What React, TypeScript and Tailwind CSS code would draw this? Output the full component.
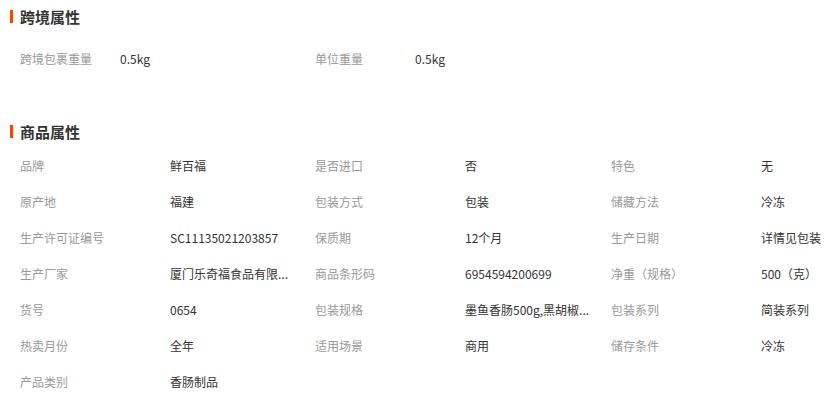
const font = { fontFamily: '"Noto Sans CJK SC", "Liberation Sans", sans-serif' }

const cross = [
  ['跨境包裹重量', '0.5kg'],
  ['单位重量', '0.5kg'],
]

// long values are shown shortened, as on the product page
const goods = [
  ['品牌', '鲜百福'],
  ['是否进口', '否'],
  ['特色', '无'],
  ['原产地', '福建'],
  ['包装方式', '包装'],
  ['储藏方法', '冷冻'],
  ['生产许可证编号', 'SC11135021203857'],
  ['保质期', '12个月'],
  ['生产日期', '详情见包装'],
  ['生产厂家', '厦门乐奇福食品有限...'],
  ['商品条形码', '6954594200699'],
  ['净重（规格）', '500（克）'],
  ['货号', '0654'],
  ['包装规格', '墨鱼香肠500g,黑胡椒...'],
  ['包装系列', '简装系列'],
  ['热卖月份', '全年'],
  ['适用场景', '商用'],
  ['储存条件', '冷冻'],
  ['产品类别', '香肠制品'],
]

function Title({ text }: { text: string }) {
  return (
    <div className="flex items-center h-[32px] pl-[10px]">
      <span className="w-[3px] h-[13px] bg-[#ff4400] mr-[7px]" />
      <h2 className="text-[15px] font-bold text-[#333] leading-none">{text}</h2>
    </div>
  )
}

export default function App() {
  return (
    <div className="w-[833px] h-[396px] bg-white overflow-hidden" style={font}>
      <Title text="跨境属性" />
      <div className="grid grid-cols-[295px_295px] pl-[20px] mt-[9px]">
        {cross.map(([k, v]) => (
          <div key={k} className="flex items-center h-[36px] text-[12px]">
            <span className="w-[100px] text-[#999]">{k}</span>
            <span className="text-[#333]">{v}</span>
          </div>
        ))}
      </div>

      <div className="mt-[38px]">
        <Title text="商品属性" />
        <div className="grid grid-cols-[295px_296px_222px] pl-[20px] mt-[1px]">
          {goods.map(([k, v]) => (
            <div key={k} className="flex items-center h-[36px] text-[12px]">
              <span className="w-[150px] shrink-0 text-[#999]">{k}</span>
              <span className="whitespace-nowrap text-[#333]">{v}</span>
            </div>
          ))}
        </div>
      </div>
    </div>
  )
}
